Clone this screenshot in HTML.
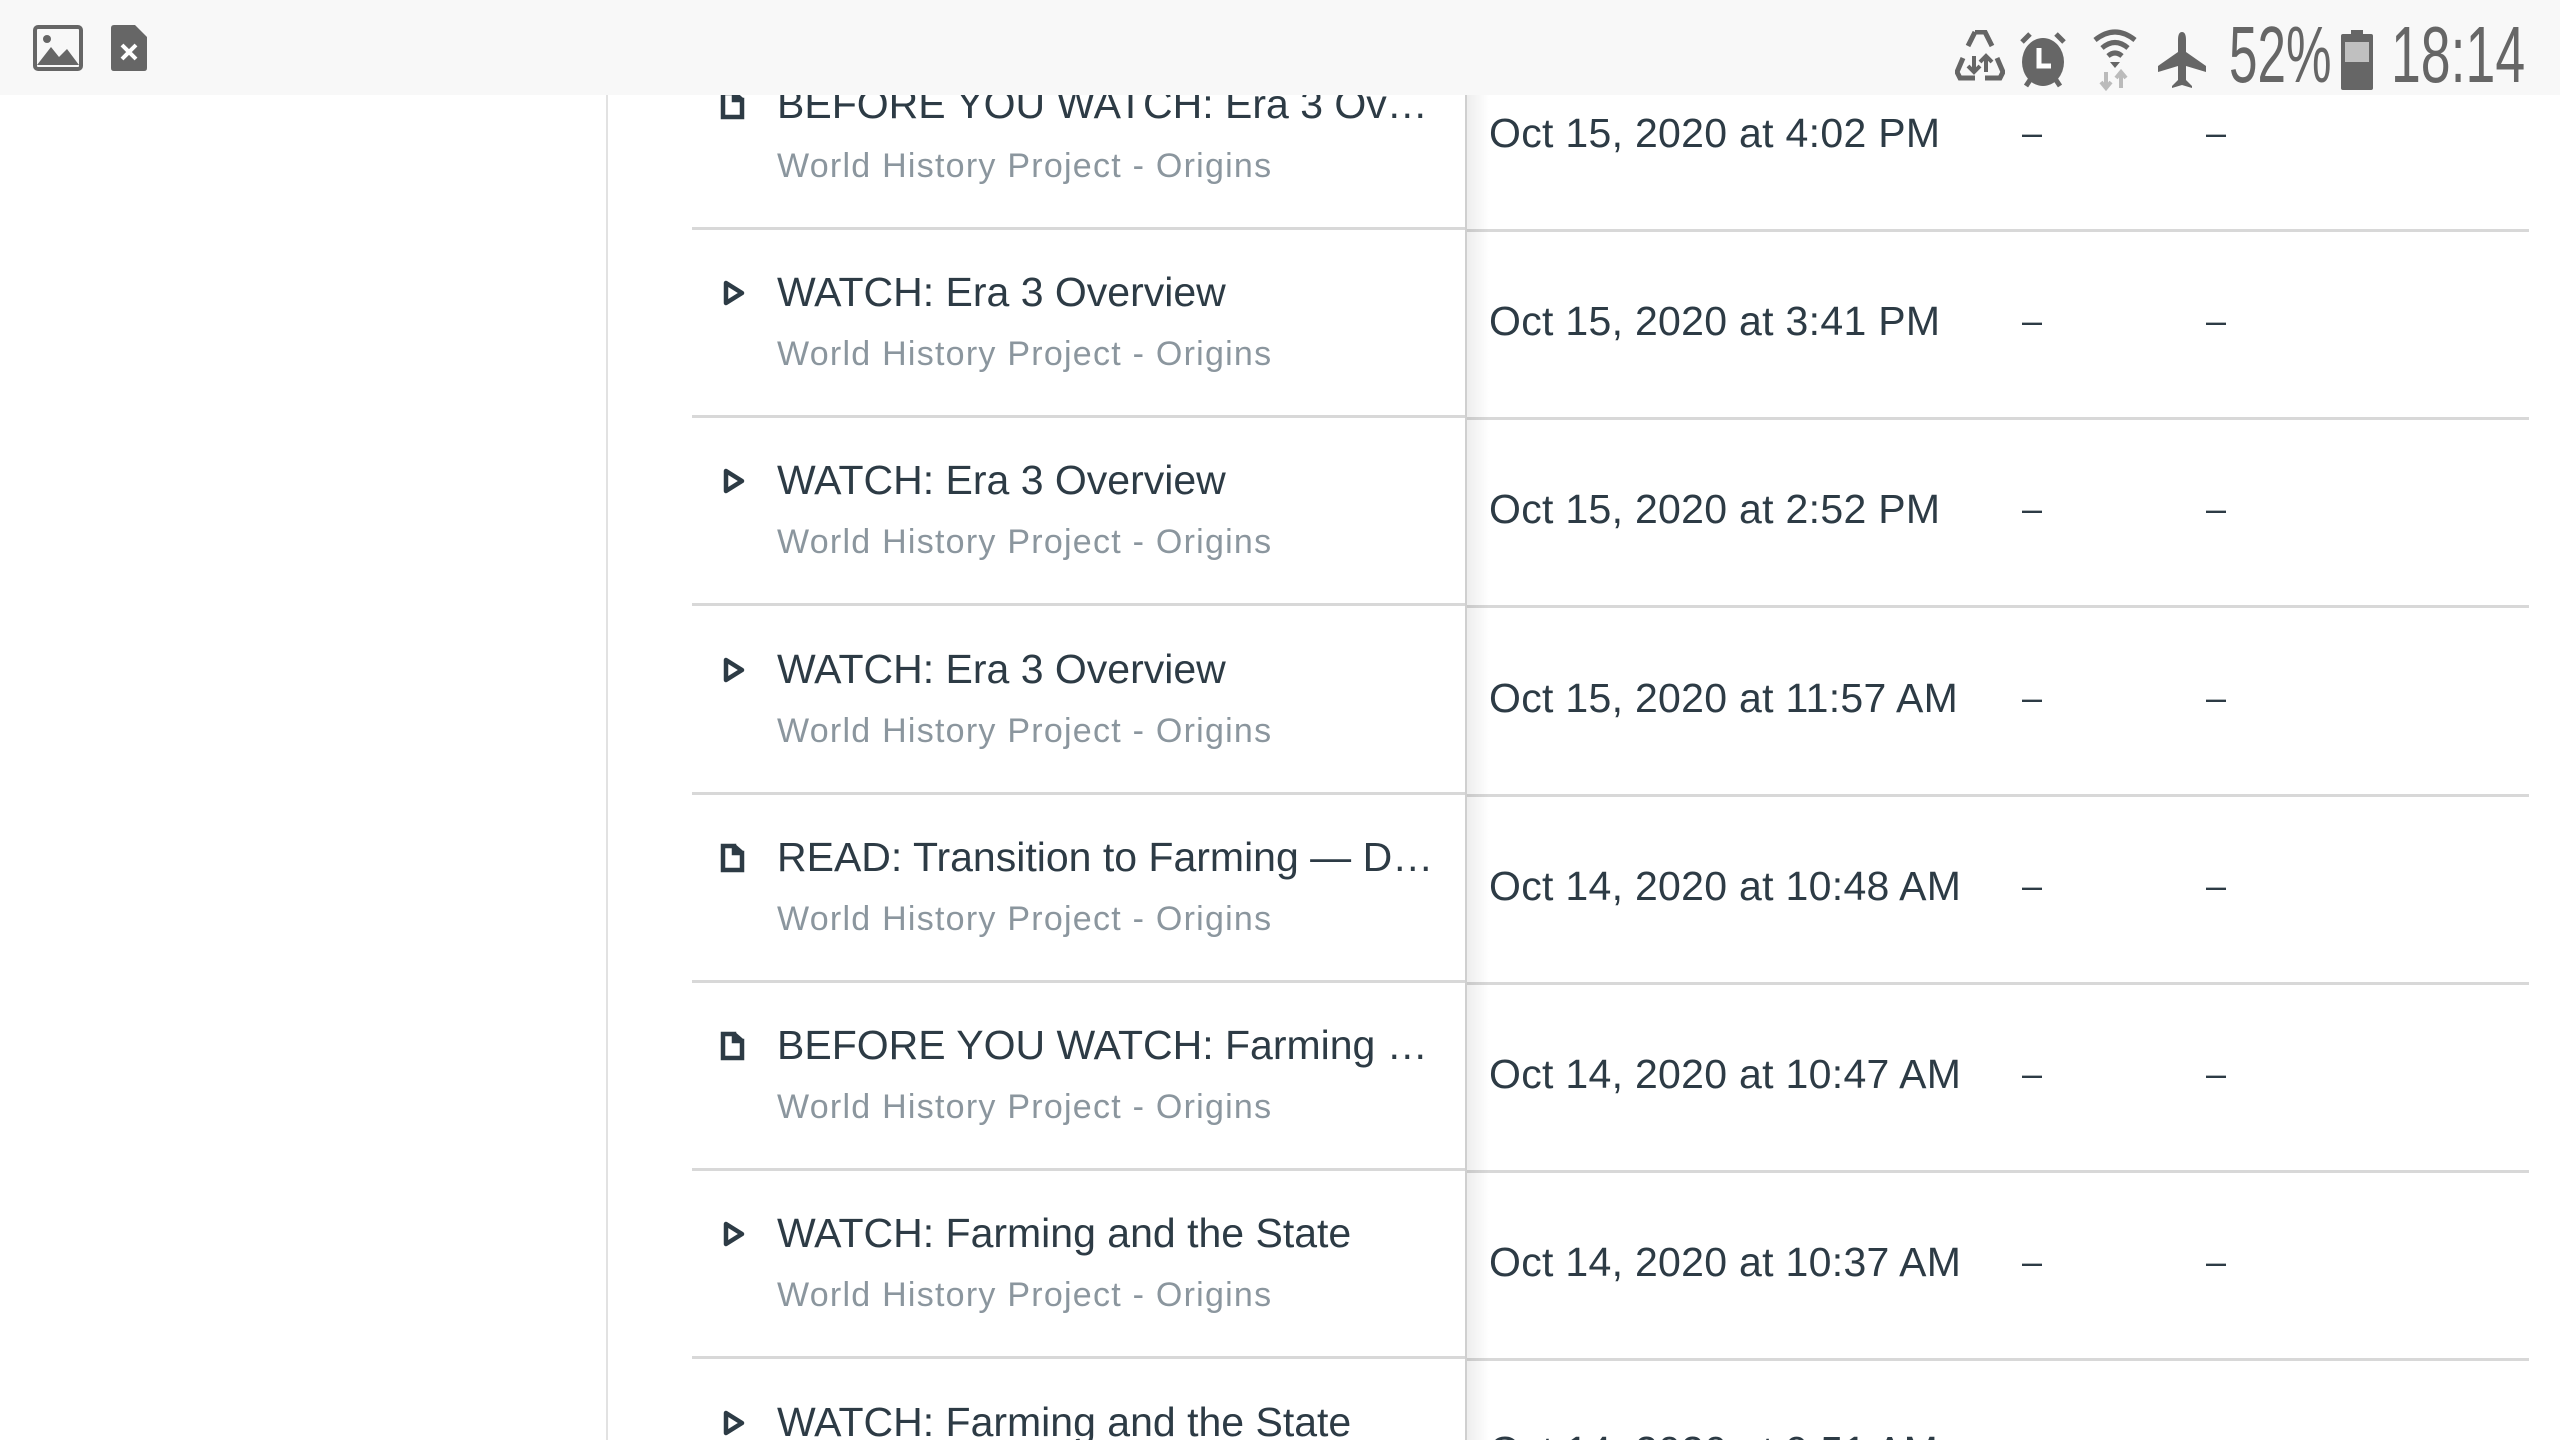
<!DOCTYPE html>
<html style="width:2560px;height:1440px;overflow:hidden"><head><meta charset="utf-8"><style>
*{margin:0;padding:0;box-sizing:border-box}
body{width:2560px;height:1440px;overflow:hidden;background:#fff;font-family:"Liberation Sans",sans-serif;position:relative}
.sb{position:absolute;left:0;top:0;width:2560px;height:95px;background:#f8f8f8;z-index:5}
.vl{position:absolute;left:606px;top:95px;width:2px;height:1345px;background:#e2e2e2}
.div{position:absolute;left:1465px;top:95px;width:2px;height:1345px;background:#cfcfcf;z-index:3}
.shadow{position:absolute;left:1467px;top:95px;width:22px;height:1345px;background:linear-gradient(to right,rgba(0,0,0,0.07),rgba(0,0,0,0));z-index:3}
.row{position:absolute;left:0;width:2560px;height:188px}
.sepl{position:absolute;left:692px;width:774px;height:3px;background:#d8d8d8;bottom:-2px}
.sepr{position:absolute;left:1467px;width:1062px;height:3px;background:#d8d8d8;bottom:-4px}
.t{position:absolute;left:777px;top:40px;width:660px;font-size:41px;color:#2d3b45;white-space:nowrap;overflow:hidden;text-overflow:ellipsis;line-height:48px}
.s{position:absolute;left:777px;top:106px;font-size:34px;color:#8b969e;line-height:40px;white-space:nowrap;letter-spacing:1.25px}
.d{position:absolute;left:1489px;top:69px;font-size:41px;color:#2d3b45;line-height:48px;white-space:nowrap;letter-spacing:0.3px}
.dash{position:absolute;top:69px;font-size:36px;color:#2d3b45;line-height:48px}
.ic{position:absolute;left:720px;top:50px}
</style></head><body>
<div class="sb">
<svg style="position:absolute;left:33px;top:25px" width="50" height="46" viewBox="0 0 50 46"><rect x="2" y="2" width="46" height="42" rx="3" fill="none" stroke="#666" stroke-width="4"/><circle cx="14" cy="14" r="4" fill="#666"/><path d="M4 40 L18 22 L26 32 L34 24 L46 40 Z" fill="#666"/></svg>
<svg style="position:absolute;left:111px;top:25px" width="36" height="46" viewBox="0 0 36 46"><path d="M3 0 H24 L36 12 V43 Q36 46 33 46 H3 Q0 46 0 43 V3 Q0 0 3 0Z" fill="#666"/><path d="M11 20 L25 34 M25 20 L11 34" stroke="#fff" stroke-width="4"/></svg>
<svg style="position:absolute;left:1955px;top:30px" width="50" height="60" viewBox="0 0 50 60"><path d="M20 2 H30 L37 16 M13 16 L20 2 M8 28 L2 42 L5 48 H20 M30 48 H45 L48 42 L42 28" fill="none" stroke="#666" stroke-width="5"/><path d="M19 26 V42 M13 36 L19 42 L25 36 M31 42 V26 M25 32 L31 26 L37 32" fill="none" stroke="#666" stroke-width="4"/></svg>
<svg style="position:absolute;left:2018px;top:30px" width="50" height="60" viewBox="0 0 50 60"><ellipse cx="25" cy="32" rx="21" ry="24" fill="#666"/><path d="M4 12 L12 4 M46 12 L38 4 M8 56 L12 50 M42 56 L38 50" stroke="#666" stroke-width="5"/><path d="M21 18 V36 H33" fill="none" stroke="#fff" stroke-width="5"/></svg>
<svg style="position:absolute;left:2092px;top:28px" width="46" height="64" viewBox="0 0 46 64"><path d="M3 12 Q23 -4 43 12" fill="none" stroke="#666" stroke-width="5"/><path d="M10 20 Q23 9 36 20" fill="none" stroke="#666" stroke-width="5"/><path d="M16 28 Q23 22 30 28" fill="none" stroke="#666" stroke-width="5"/><path d="M18 34 L23 40 L28 34Z" fill="#666"/><path d="M14 44 V60 M9 54 L14 60 L19 54" fill="none" stroke="#bbb" stroke-width="4"/><path d="M29 60 V44 M24 50 L29 44 L34 50" fill="none" stroke="#bbb" stroke-width="4"/></svg>
<svg style="position:absolute;left:2156px;top:30px" width="52" height="60" viewBox="0 0 52 60"><path d="M26 2 Q30 2 30 10 V22 L50 36 V42 L30 36 V50 L36 56 V58 L26 55 L16 58 V56 L22 50 V36 L2 42 V36 L22 22 V10 Q22 2 26 2Z" fill="#666"/></svg>
<div style="position:absolute;left:2229px;top:13px;font-size:80px;color:#666;line-height:84px;transform:scaleX(0.64);transform-origin:left">52%</div>
<svg style="position:absolute;left:2341px;top:30px" width="32" height="60" viewBox="0 0 32 60"><rect x="10" y="0" width="12" height="5" fill="#666"/><rect x="0" y="4" width="32" height="56" rx="2" fill="#666"/><rect x="4" y="12" width="24" height="20" fill="#c0c0c0"/></svg>
<div style="position:absolute;left:2391px;top:13px;font-size:80px;color:#666;line-height:84px;transform:scaleX(0.67);transform-origin:left">18:14</div>
</div>
<div class="vl"></div><div class="div"></div><div class="shadow"></div>
<svg width="0" height="0" style="position:absolute"><defs>
<symbol id="doc" viewBox="0 0 28 30"><path d="M3 3 H14 L14 10 H22 V27 H3 Z M14 3 L22 10" fill="none" stroke="#2d3b45" stroke-width="4.5" stroke-linejoin="miter"/></symbol>
<symbol id="play" viewBox="0 0 28 30"><path d="M6 5 L22 15 L6 25 Z" fill="none" stroke="#2d3b45" stroke-width="4.5" stroke-linejoin="round"/></symbol>
</defs></svg>

<div class="row" style="top:40px"><svg class="ic" width="28" height="30"><use href="#doc"/></svg><div class="t">BEFORE YOU WATCH: Era 3 Overview</div><div class="s">World History Project - Origins</div><div class="d">Oct 15, 2020 at 4:02 PM</div><div class="dash" style="left:2022px">–</div><div class="dash" style="left:2206px">–</div><div class="sepl"></div><div class="sepr"></div></div>
<div class="row" style="top:228px"><svg class="ic" width="28" height="30"><use href="#play"/></svg><div class="t">WATCH: Era 3 Overview</div><div class="s">World History Project - Origins</div><div class="d">Oct 15, 2020 at 3:41 PM</div><div class="dash" style="left:2022px">–</div><div class="dash" style="left:2206px">–</div><div class="sepl"></div><div class="sepr"></div></div>
<div class="row" style="top:416px"><svg class="ic" width="28" height="30"><use href="#play"/></svg><div class="t">WATCH: Era 3 Overview</div><div class="s">World History Project - Origins</div><div class="d">Oct 15, 2020 at 2:52 PM</div><div class="dash" style="left:2022px">–</div><div class="dash" style="left:2206px">–</div><div class="sepl"></div><div class="sepr"></div></div>
<div class="row" style="top:605px"><svg class="ic" width="28" height="30"><use href="#play"/></svg><div class="t">WATCH: Era 3 Overview</div><div class="s">World History Project - Origins</div><div class="d">Oct 15, 2020 at 11:57 AM</div><div class="dash" style="left:2022px">–</div><div class="dash" style="left:2206px">–</div><div class="sepl"></div><div class="sepr"></div></div>
<div class="row" style="top:793px"><svg class="ic" width="28" height="30"><use href="#doc"/></svg><div class="t">READ: Transition to Farming — Different Paths</div><div class="s">World History Project - Origins</div><div class="d">Oct 14, 2020 at 10:48 AM</div><div class="dash" style="left:2022px">–</div><div class="dash" style="left:2206px">–</div><div class="sepl"></div><div class="sepr"></div></div>
<div class="row" style="top:981px"><svg class="ic" width="28" height="30"><use href="#doc"/></svg><div class="t">BEFORE YOU WATCH: Farming and the State</div><div class="s">World History Project - Origins</div><div class="d">Oct 14, 2020 at 10:47 AM</div><div class="dash" style="left:2022px">–</div><div class="dash" style="left:2206px">–</div><div class="sepl"></div><div class="sepr"></div></div>
<div class="row" style="top:1169px"><svg class="ic" width="28" height="30"><use href="#play"/></svg><div class="t">WATCH: Farming and the State</div><div class="s">World History Project - Origins</div><div class="d">Oct 14, 2020 at 10:37 AM</div><div class="dash" style="left:2022px">–</div><div class="dash" style="left:2206px">–</div><div class="sepl"></div><div class="sepr"></div></div>
<div class="row" style="top:1358px;height:82px;overflow:hidden"><svg class="ic" width="28" height="30"><use href="#play"/></svg><div class="t">WATCH: Farming and the State</div><div class="d">Oct 14, 2020 at 9:51 AM</div><div class="dash" style="left:2022px">–</div><div class="dash" style="left:2206px">–</div></div>
</body></html>
